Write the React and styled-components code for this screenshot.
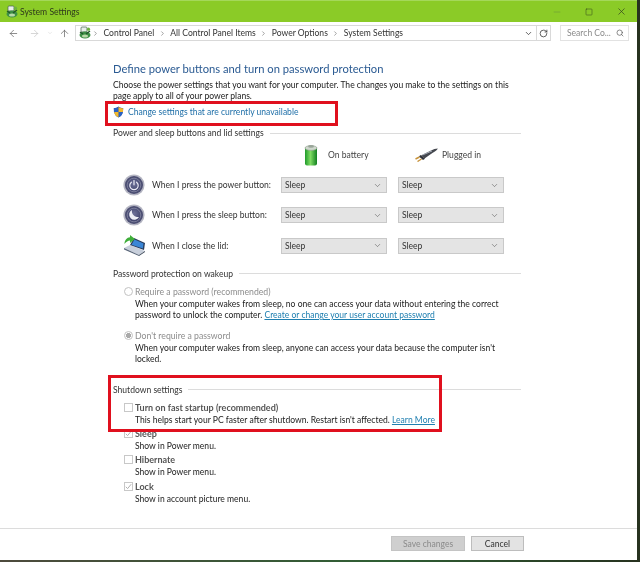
import React from 'react';
import styled, { createGlobalStyle } from 'styled-components';
import { ArrowLeft, ArrowRight, ArrowUp, ChevronDown, ChevronRight, Minus, RotateCw, Search, Square, X } from 'lucide-react';

const Global = createGlobalStyle`
  html, body {
    margin: 0;
    padding: 0;
    background: #2f3a26;
  }
  * {
    box-sizing: border-box;
  }
`

const Page = styled.div`
  position: relative;
  width: 640px;
  height: 562px;
  overflow: hidden;
  background: linear-gradient(90deg, #4d4a3c, #2f5f34 60%, #27321f);
  font-family: "Lato", "Noto Sans", sans-serif;
  font-size: 8.55px;
  color: #222;
  filter: blur(0.3px);
`

const Window = styled.div`
  width: 637px;
  height: 560px;
  background: #fff;
  display: flex;
  flex-direction: column;
`

const TitleBar = styled.div`
  height: 22px;
  flex: none;
  background: #8bcb27;
  border-top: 1px solid #a4d85a;
  display: flex;
  align-items: center;
  padding-left: 5px;
  color: #2f3a1c;
  font-size: 8.6px;
`

const TitleText = styled.span`
  margin-left: 1px;
  flex: 1;
`

const WinButton = styled.div`
  width: 32px;
  display: flex;
  justify-content: center;
  align-items: center;
  color: ${p => p.$faded ? '#6f9a3a' : '#33421f'};
`

const NavBar = styled.div`
  height: 22px;
  flex: none;
  display: flex;
  align-items: center;
  padding-left: 5px;
  color: #555;
`

const NavIcon = styled.div`
  width: ${p => p.$w}px;
  display: flex;
  justify-content: center;
  color: ${p => p.$faded ? '#c4c4c4' : '#5c5c5c'};
`

const AddressBox = styled.div`
  width: 476px;
  height: 16px;
  border: 1px solid #d9d9d9;
  display: flex;
  align-items: center;
  padding-left: 2px;
  color: #333;
`

const Crumb = styled.span`
  margin: 0 4.5px;
  white-space: nowrap;
`

const Separator = styled(ChevronRight)`
  color: #666;
  flex: none;
`

const AddressEnd = styled.div`
  margin-left: auto;
  display: flex;
  align-items: center;
  height: 100%;
`

const RefreshBox = styled.div`
  width: 14px;
  height: 100%;
  margin-left: 3px;
  border-left: 1px solid #d9d9d9;
  display: flex;
  align-items: center;
  justify-content: center;
`

const SearchBox = styled.div`
  width: 69px;
  height: 16px;
  margin-left: 9px;
  border: 1px solid #e2e2e2;
  display: flex;
  align-items: center;
  justify-content: space-between;
  padding: 0 4px 0 6px;
  color: #8a8a8a;
`

const Content = styled.div`
  flex: 1;
  padding: 17px 116px 0 113px;
`

const Heading = styled.h1`
  margin: 0;
  font-size: 11.2px;
  line-height: 16px;
  font-weight: 400;
  color: #2a5a92;
`

const Intro = styled.p`
  margin: 3px 0 0;
  line-height: 11px;
  white-space: nowrap;
`

const ChangeLink = styled.div`
  display: flex;
  align-items: center;
  gap: 4px;
  margin-top: 2px;
  height: 16px;
  color: #1f6fa8;
`

const SectionTitle = styled.div`
  display: flex;
  align-items: center;
  gap: 6px;
  margin-top: ${p => p.$top}px;
  height: 12px;
  color: #333;
  white-space: nowrap;
  &::after {
    content: '';
    flex: 1;
    height: 1px;
    background: #dcdcdc;
  }
`

const Grid = styled.div`
  display: grid;
  grid-template-columns: 38px 130px 107px 107px;
`

const ColumnHead = styled.div`
  grid-column: ${p => p.$col};
  height: 31px;
  display: flex;
  align-items: center;
  gap: ${p => p.$gap}px;
  padding-left: ${p => p.$pad}px;
  color: #444;
`

const RowIcon = styled.div`
  height: 30.3px;
  display: flex;
  align-items: center;
  padding-left: 10px;
`

const RowLabel = styled.div`
  height: 30.3px;
  display: flex;
  align-items: center;
  padding-left: 1px;
  color: #333;
`

const Select = styled.div`
  align-self: center;
  width: 106px;
  height: 16px;
  margin-left: ${p => p.$left || 0}px;
  background: #e4e4e4;
  border: 1px solid #c9c9c9;
  display: flex;
  align-items: center;
  justify-content: space-between;
  padding: 0 4px 0 3px;
  color: #333;
`

const Option = styled.div`
  display: grid;
  grid-template-columns: 12px 1fr;
  margin-top: ${p => p.$top}px;
  margin-left: 10px;
  line-height: 11px;
  white-space: nowrap;
`

const OptionLabel = styled.div`
  color: ${p => p.$dim ? '#8d8d8d' : '#555'};
  line-height: 12px;
  font-size: ${p => p.$semi ? 9 : 8.7}px;
  font-weight: ${p => p.$semi ? 700 : 400};
`

const OptionText = styled.div`
  grid-column: 2;
  color: #222;
  margin-top: 1px;
`

const Radio = styled.div`
  width: 9px;
  height: 9px;
  margin: 1px 0 0 1px;
  border-radius: 50%;
  border: 1px solid #c2c2c2;
  background: ${p => p.$on ? 'radial-gradient(circle, #a9a9a9 0 2.4px, #fff 2.8px)' : '#fff'};
`

const Check = styled.div`
  width: 9px;
  height: 9px;
  margin: 1px 0 0 1px;
  border: 1px solid #c8c8c8;
  display: flex;
  align-items: center;
  justify-content: center;
  color: #a8a8a8;
`

const Anchor = styled.a`
  color: #1f7fb0;
  text-decoration: underline;
`

const Footer = styled.div`
  flex: none;
  height: 32px;
  border-top: 1px solid #dcdcdc;
  display: flex;
  justify-content: flex-end;
  align-items: flex-start;
  gap: 6px;
  padding: 7px 113px 0 0;
`

const Button = styled.div`
  width: ${p => p.$w}px;
  height: 15px;
  display: flex;
  align-items: center;
  justify-content: center;
  background: ${p => p.$off ? '#cfcfcf' : '#e3e3e3'};
  border: 1px solid ${p => p.$off ? '#c4c4c4' : '#bdbdbd'};
  color: ${p => p.$off ? '#8b8b8b' : '#333'};
`

const Highlight = styled.div`
  position: absolute;
  left: ${p => p.$x}px;
  top: ${p => p.$y}px;
  width: ${p => p.$w}px;
  height: ${p => p.$h}px;
  border: 3px solid #e0101e;
  pointer-events: none;
`

function PanelIcon() {
  return (
    <svg width="14" height="14" viewBox="0 0 14 14">
      <rect x="3" y="1" width="6" height="5" rx="1" fill="#e8efe8" stroke="#44604a" strokeWidth=".7" />
      <ellipse cx="7" cy="9" rx="5.5" ry="3.5" fill="#3d8f45" />
      <path d="M2 6l3 2M12 5L8 8" stroke="#22552b" strokeWidth="1.4" />
      <ellipse cx="7" cy="10" rx="3" ry="1.6" fill="#b8d9a8" />
      <circle cx="10.5" cy="3.2" r="1.6" fill="#6cb13f" />
    </svg>
  )
}

function ShieldIcon() {
  return (
    <svg width="11" height="12" viewBox="0 0 11 12">
      <path d="M5.5 .5C4 1.6 2.4 2 .8 2 .8 6.5 1.8 9.8 5.5 11.5 9.2 9.8 10.2 6.5 10.2 2 8.6 2 7 1.6 5.5 .5z" fill="#274d96" />
      <path d="M5.5 .9V6H.9C1.1 4.8.9 3.3.9 2.2 2.6 2.1 4 1.8 5.5.9z" fill="#2a62c4" />
      <path d="M5.5 6h4.4C9.5 8.4 8 10.3 5.5 11.3z" fill="#2a62c4" />
      <path d="M5.5 .9c1.5.9 2.9 1.2 4.6 1.3 0 1.3 0 2.5-.2 3.8H5.5z" fill="#f2b92d" />
      <path d="M5.5 6v5.3C3 10.3 1.6 8.4 1.1 6z" fill="#f2b92d" />
    </svg>
  )
}

function BatteryIcon() {
  return (
    <svg width="14" height="22" viewBox="0 0 14 22">
      <defs>
        <linearGradient id="batt" x1="0" x2="1" y1="0" y2="0">
          <stop offset="0" stopColor="#1f9a2b" />
          <stop offset=".45" stopColor="#7fdc63" />
          <stop offset="1" stopColor="#118020" />
        </linearGradient>
      </defs>
      <rect x="1" y="3" width="12" height="18.5" rx="2" fill="url(#batt)" />
      <ellipse cx="7" cy="4" rx="6" ry="2.4" fill="#cfd8cd" stroke="#8b9a8b" strokeWidth=".6" />
      <ellipse cx="7" cy="2.4" rx="3" ry="1.4" fill="#9aa69a" />
    </svg>
  )
}

function PlugIcon() {
  return (
    <svg width="23" height="14" viewBox="0 0 23 14">
      <path d="M6 7.5L16 2.5c2.500-1.200 4.500-1.800 6.800-2-.8 1.600-2.600 3-5 4.300L9.500 10.500z" fill="#45484f" />
      <path d="M7.500 7L17 3" stroke="#a6acb6" strokeWidth="1" />
      <path d="M5.500 7l4.500 3.800-2 1.200L4 8.500z" fill="#2f3138" />
      <path d="M4.500 9L.500 11M6.500 11L2.500 13.500" stroke="#c7923a" strokeWidth="1.400" />
    </svg>
  )
}

function PowerIcon({ kind, id }) {
  return (
    <svg width="22" height="22" viewBox="0 0 22 22">
      <defs>
        <radialGradient id={id} cx=".5" cy=".4" r=".65">
          <stop offset="0" stopColor="#6d7198" />
          <stop offset="1" stopColor="#3a3d66" />
        </radialGradient>
      </defs>
      <circle cx="11" cy="11" r="10.6" fill="#b4b5c2" />
      <circle cx="11" cy="11" r="9" fill="#4b4e72" />
      <circle cx="11" cy="11" r="6.800" fill={`url(#${id})`} stroke="#9a9cb4" strokeWidth=".6" />
      {kind === 'power' ? (
        <g fill="none" stroke="#e8e8f2" strokeWidth="1.200" strokeLinecap="round">
          <path d="M8.400 8.200a4.200 4.200 0 1 0 5.200 0" />
          <path d="M11 6.600v4.200" />
        </g>
      ) : (
        <path d="M9 6a5.200 5.200 0 1 0 7 7A6 6 0 0 1 9 6z" fill="#eef0f6" />
      )}
    </svg>
  )
}

function LidIcon() {
  return (
    <svg width="23" height="21" viewBox="0 0 23 21">
      <path d="M1 13l6-3 15 6-6 4z" fill="#c8cfdb" />
      <path d="M1 13l15 7v1L1 14.500z" fill="#596679" />
      <path d="M16 20l6-4v1l-6 4z" fill="#3b4657" />
      <path d="M7 10l4-7 11 5-1 7z" fill="#2a3c5c" />
      <path d="M8.500 9.800l3-5.400 9 4-.6 5z" fill="#3a86d6" />
      <path d="M1.500 9C1.500 5 4 2.500 7 2.300L7 0l5 4-5 4V5.600C5 5.800 3.200 7 1.500 9z" fill="#3fae3a" />
    </svg>
  )
}

function Tick() {
  return (
    <svg width="7" height="7" viewBox="0 0 7 7">
      <path d="M.8 3.800L2.600 5.600 6.200 1.200" fill="none" stroke="currentColor" strokeWidth=".9" />
    </svg>
  )
}

const rows = [
  { label: 'When I press the power button:', icon: <PowerIcon kind="power" id="pw" /> },
  { label: 'When I press the sleep button:', icon: <PowerIcon kind="sleep" id="sl" /> },
  { label: 'When I close the lid:', icon: <LidIcon /> },
]

function App() {
  return (
    <Page>
      <Global />
      <Window>
        <TitleBar>
          <PanelIcon />
          <TitleText>System Settings</TitleText>
          <WinButton $faded><Minus size={10} strokeWidth={1.5} /></WinButton>
          <WinButton><Square size={8} strokeWidth={1.5} /></WinButton>
          <WinButton><X size={11} strokeWidth={1.5} /></WinButton>
        </TitleBar>
        <NavBar>
          <NavIcon $w={16}><ArrowLeft size={11} strokeWidth={1.5} /></NavIcon>
          <NavIcon $w={26} $faded><ArrowRight size={11} strokeWidth={1.5} /></NavIcon>
          <NavIcon $w={6} $faded><ChevronDown size={8} strokeWidth={1.5} /></NavIcon>
          <NavIcon $w={22}><ArrowUp size={11} strokeWidth={1.5} /></NavIcon>
          <AddressBox>
            <PanelIcon />
            <Separator size={7} />
            <Crumb>Control Panel</Crumb>
            <Separator size={7} />
            <Crumb>All Control Panel Items</Crumb>
            <Separator size={7} />
            <Crumb>Power Options</Crumb>
            <Separator size={7} />
            <Crumb>System Settings</Crumb>
            <AddressEnd>
              <ChevronDown size={9} />
              <RefreshBox><RotateCw size={9} /></RefreshBox>
            </AddressEnd>
          </AddressBox>
          <SearchBox>
            <span>Search Co...</span>
            <Search size={8} color="#555" />
          </SearchBox>
        </NavBar>
        <Content>
          <Heading>Define power buttons and turn on password protection</Heading>
          <Intro>
            Choose the power settings that you want for your computer. The changes you make to the settings on this<br />
            page apply to all of your power plans.
          </Intro>
          <ChangeLink>
            <ShieldIcon />
            <span>Change settings that are currently unavailable</span>
          </ChangeLink>
          <SectionTitle $top={7}>Power and sleep buttons and lid settings</SectionTitle>
          <Grid>
            <ColumnHead $col="3" $pad={23} $gap={10}><BatteryIcon />On battery</ColumnHead>
            <ColumnHead $col="4" $pad={27} $gap={4}><PlugIcon />Plugged in</ColumnHead>
            {rows.map(r => (
              <React.Fragment key={r.label}>
                <RowIcon>{r.icon}</RowIcon>
                <RowLabel>{r.label}</RowLabel>
                <Select>Sleep<ChevronDown size={9} strokeWidth={1.2} /></Select>
                <Select $left={10}>Sleep<ChevronDown size={9} strokeWidth={1.2} /></Select>
              </React.Fragment>
            ))}
          </Grid>
          <SectionTitle $top={7}>Password protection on wakeup</SectionTitle>
          <Option $top={6}>
            <Radio />
            <OptionLabel $dim>Require a password (recommended)</OptionLabel>
            <OptionText>
              When your computer wakes from sleep, no one can access your data without entering the correct<br />
              password to unlock the computer. <Anchor>Create or change your user account password</Anchor>
            </OptionText>
          </Option>
          <Option $top={9}>
            <Radio $on />
            <OptionLabel $dim>Don't require a password</OptionLabel>
            <OptionText>
              When your computer wakes from sleep, anyone can access your data because the computer isn't<br />
              locked.
            </OptionText>
          </Option>
          <SectionTitle $top={19}>Shutdown settings</SectionTitle>
          <Option $top={6}>
            <Check />
            <OptionLabel $semi>Turn on fast startup (recommended)</OptionLabel>
            <OptionText>
              This helps start your PC faster after shutdown. Restart isn't affected. <Anchor>Learn More</Anchor>
            </OptionText>
          </Option>
          <Option $top={2}>
            <Check><Tick /></Check>
            <OptionLabel $semi>Sleep</OptionLabel>
            <OptionText>Show in Power menu.</OptionText>
          </Option>
          <Option $top={2}>
            <Check />
            <OptionLabel $semi>Hibernate</OptionLabel>
            <OptionText>Show in Power menu.</OptionText>
          </Option>
          <Option $top={3}>
            <Check><Tick /></Check>
            <OptionLabel $semi>Lock</OptionLabel>
            <OptionText>Show in account picture menu.</OptionText>
          </Option>
        </Content>
        <Footer>
          <Button $w={74} $off>Save changes</Button>
          <Button $w={53}>Cancel</Button>
        </Footer>
      </Window>
      <Highlight $x={105} $y={101} $w={233} $h={25} />
      <Highlight $x={108} $y={375} $w={334} $h={57} />
    </Page>
  )
}

export default App;
